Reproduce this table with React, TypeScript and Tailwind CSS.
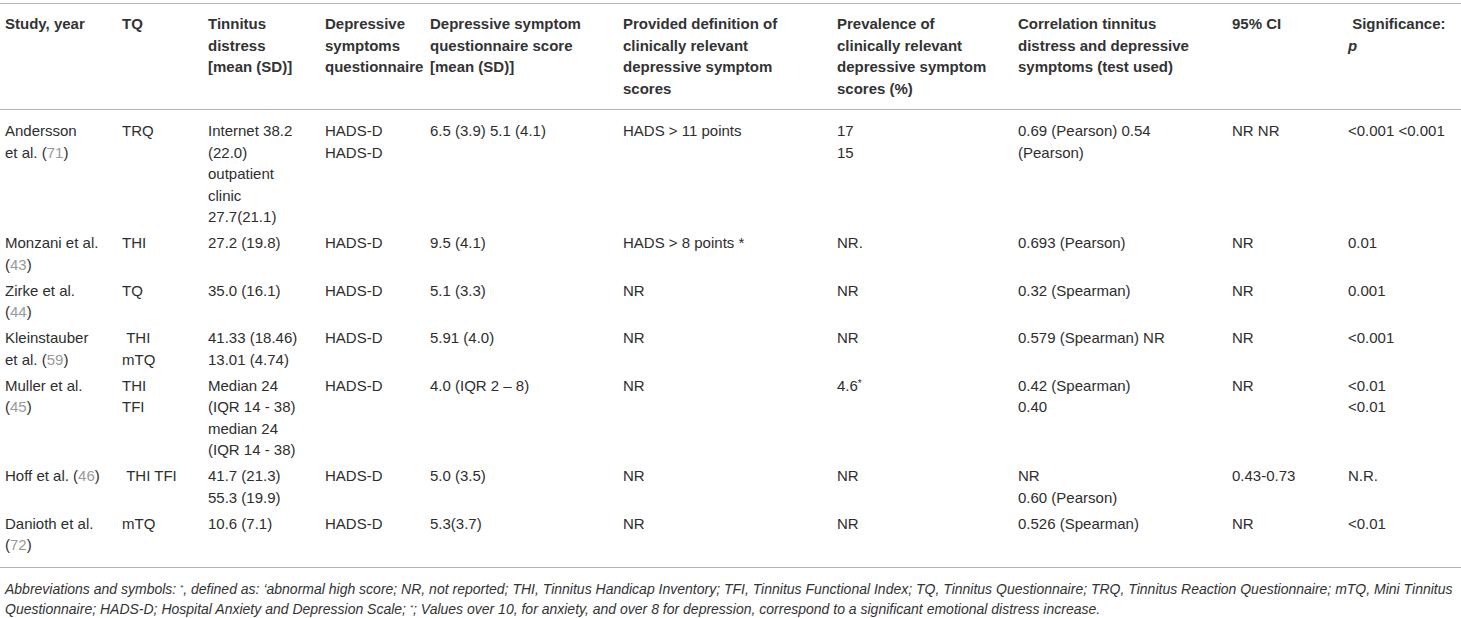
import React from "react";

type Cell = string[];

const header: Cell[] = [
  ["Study, year"],
  ["TQ"],
  ["Tinnitus", "distress", "[mean (SD)]"],
  ["Depressive", "symptoms", "questionnaire"],
  ["Depressive symptom", "questionnaire score", "[mean (SD)]"],
  ["Provided definition of", "clinically relevant", "depressive symptom", "scores"],
  ["Prevalence of", "clinically relevant", "depressive symptom", "scores (%)"],
  ["Correlation tinnitus", "distress and depressive", "symptoms (test used)"],
  ["95% CI"],
];

// study cell: lines, last piece is the ref number shown in grey
type Study = { lines: string[]; ref: string; refOnOwnLine: boolean };

const rows: { study: Study; cells: Cell[] }[] = [
  {
    study: { lines: ["Andersson", "et al."], ref: "71", refOnOwnLine: false },
    cells: [
      ["TRQ"],
      ["Internet 38.2", "(22.0)", "outpatient", "clinic", "27.7(21.1)"],
      ["HADS-D", "HADS-D"],
      ["6.5 (3.9) 5.1 (4.1)"],
      ["HADS > 11 points"],
      ["17", "15"],
      ["0.69 (Pearson) 0.54", "(Pearson)"],
      ["NR NR"],
      ["<0.001 <0.001"],
    ],
  },
  {
    study: { lines: ["Monzani et al."], ref: "43", refOnOwnLine: true },
    cells: [["THI"], ["27.2 (19.8)"], ["HADS-D"], ["9.5 (4.1)"], ["HADS > 8 points *"], ["NR."], ["0.693 (Pearson)"], ["NR"], ["0.01"]],
  },
  {
    study: { lines: ["Zirke et al."], ref: "44", refOnOwnLine: true },
    cells: [["TQ"], ["35.0 (16.1)"], ["HADS-D"], ["5.1 (3.3)"], ["NR"], ["NR"], ["0.32 (Spearman)"], ["NR"], ["0.001"]],
  },
  {
    study: { lines: ["Kleinstauber", "et al."], ref: "59", refOnOwnLine: false },
    cells: [
      ["\u00a0THI", "mTQ"],
      ["41.33 (18.46)", "13.01 (4.74)"],
      ["HADS-D"],
      ["5.91 (4.0)"],
      ["NR"],
      ["NR"],
      ["0.579 (Spearman) NR"],
      ["NR"],
      ["<0.001"],
    ],
  },
  {
    study: { lines: ["Muller et al."], ref: "45", refOnOwnLine: true },
    cells: [
      ["THI", "TFI"],
      ["Median 24", "(IQR 14 - 38)", "median 24", "(IQR 14 - 38)"],
      ["HADS-D"],
      ["4.0 (IQR 2 \u2013 8)"],
      ["NR"],
      ["4.6*"],
      ["0.42 (Spearman)", "0.40"],
      ["NR"],
      ["<0.01", "<0.01"],
    ],
  },
  {
    study: { lines: ["Hoff et al."], ref: "46", refOnOwnLine: false },
    cells: [
      ["\u00a0THI TFI"],
      ["41.7 (21.3)", "55.3 (19.9)"],
      ["HADS-D"],
      ["5.0 (3.5)"],
      ["NR"],
      ["NR"],
      ["NR", "0.60 (Pearson)"],
      ["0.43-0.73"],
      ["N.R."],
    ],
  },
  {
    study: { lines: ["Danioth et al."], ref: "72", refOnOwnLine: true },
    cells: [["mTQ"], ["10.6 (7.1)"], ["HADS-D"], ["5.3(3.7)"], ["NR"], ["NR"], ["0.526 (Spearman)"], ["NR"], ["<0.01"]],
  },
];

const widths = ["w-[117px]", "w-[86px]", "w-[117px]", "w-[105px]", "w-[193px]", "w-[214px]", "w-[181px]", "w-[214px]", "w-[116px]", "w-[118px]"];

const Lines: React.FC<{ lines: string[] }> = ({ lines }) => (
  <>
    {lines.map((l, i) => (
      <div key={i} className="whitespace-pre">
        {l === "4.6*" ? (
          <>
            4.6<span className="relative -top-[4px] text-[10px]">*</span>
          </>
        ) : (
          l
        )}
      </div>
    ))}
  </>
);

const StudyCell: React.FC<{ s: Study }> = ({ s }) => {
  const ref = <span className="text-[#9a9a9a]">{s.ref}</span>;
  if (s.refOnOwnLine) {
    return (
      <>
        {s.lines.map((l, i) => (
          <div key={i} className="whitespace-pre">{l}</div>
        ))}
        <div>({ref})</div>
      </>
    );
  }
  return (
    <>
      {s.lines.map((l, i) =>
        i === s.lines.length - 1 ? (
          <div key={i} className="whitespace-pre">
            {l} ({ref})
          </div>
        ) : (
          <div key={i} className="whitespace-pre">{l}</div>
        )
      )}
    </>
  );
};

export default function App() {
  return (
    <div className="w-[1461px] h-[618px] bg-white overflow-hidden pt-[3px] text-[#2e2e2e] [font-family:'Liberation_Sans',Arial,sans-serif]">
      <table className="table-fixed border-collapse w-[1461px] text-[15px] leading-[21.5px]">
        <thead>
          <tr className="border-t border-b border-[#b3b3b3] align-top font-bold text-[#333]">
            {header.map((h, i) => (
              <th key={i} className={`${widths[i]} text-left font-bold pl-[5px] pt-[9px] pb-[10px]`}>
                <Lines lines={h} />
              </th>
            ))}
            <th className={`${widths[9]} text-left font-bold pl-[5px] pt-[9px] pb-[10px]`}>
              <div className="whitespace-pre">{"\u00a0Significance:"}</div>
              <div className="italic">p</div>
            </th>
          </tr>
        </thead>
        <tbody>
          {rows.map((r, ri) => (
            <tr key={ri} className={`align-top ${ri === rows.length - 1 ? "border-b border-[#b3b3b3]" : ""}`}>
              <td className={`pl-[5px] ${ri === 0 ? "pt-[10px]" : "pt-[2px]"} ${ri === rows.length - 1 ? "pb-[11px]" : "pb-[2.5px]"}`}>
                <StudyCell s={r.study} />
              </td>
              {r.cells.map((c, ci) => (
                <td key={ci} className={`pl-[5px] ${ri === 0 ? "pt-[10px]" : "pt-[2px]"} ${ri === rows.length - 1 ? "pb-[11px]" : "pb-[2.5px]"}`}>
                  <Lines lines={c} />
                </td>
              ))}
            </tr>
          ))}
        </tbody>
      </table>
      <div className="pl-[5px] pt-[11px] text-[14px] leading-[20px] italic text-[#333] whitespace-nowrap">
        <div>
          Abbreviations and symbols: <sup className="text-[8px]">*</sup>, defined as: ‘abnormal high score; NR, not reported; THI, Tinnitus Handicap Inventory; TFI, Tinnitus Functional Index; TQ, Tinnitus Questionnaire; TRQ, Tinnitus Reaction Questionnaire; mTQ, Mini Tinnitus
        </div>
        <div>
          Questionnaire; HADS-D; Hospital Anxiety and Depression Scale; <sup className="text-[8px]">*</sup>; Values over 10, for anxiety, and over 8 for depression, correspond to a significant emotional distress increase.
        </div>
      </div>
    </div>
  );
}
